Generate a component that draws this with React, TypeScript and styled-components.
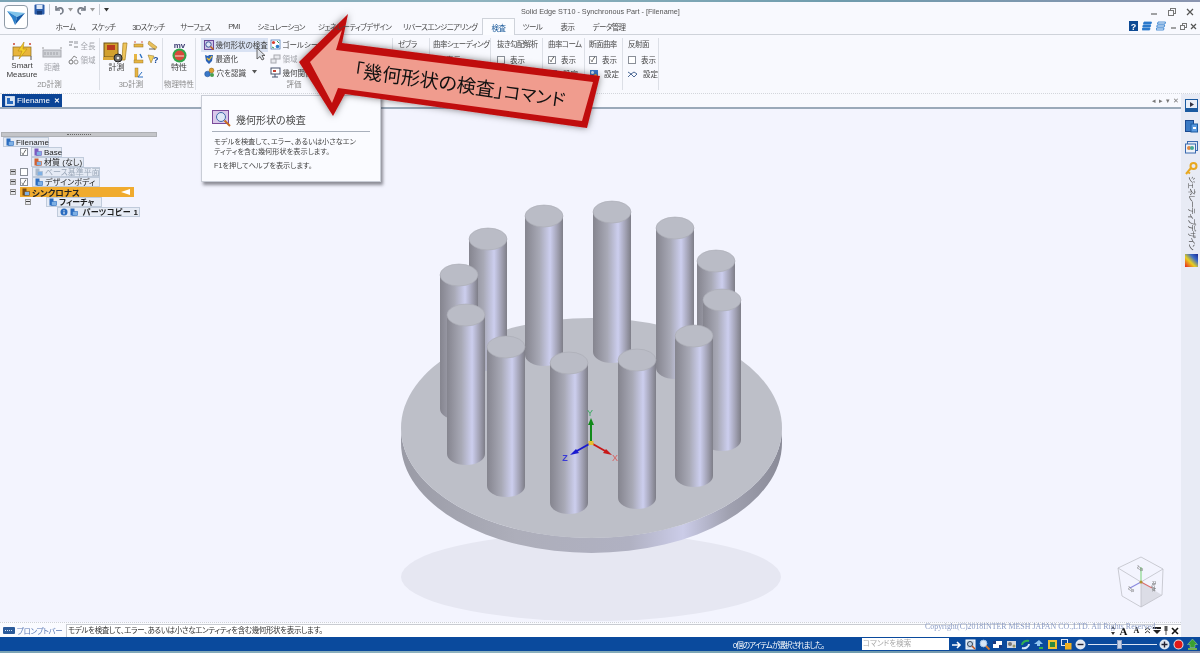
import React from 'react';
import styled, { createGlobalStyle } from 'styled-components';

const Global = createGlobalStyle`
  html, body { margin: 0; padding: 0; background: #f7f8fe; overflow: hidden; }
  * { box-sizing: border-box; }
`;

const JP = `"Noto Sans CJK JP", "Noto Sans", sans-serif`;

const Page = styled.div`
  position: relative;
  width: 1200px;
  height: 653px;
  overflow: hidden;
  display: flex;
  flex-direction: column;
  background: #f8f9fe;
  color: #3c3c3c;
  font-family: "Liberation Sans", ${JP};
  font-feature-settings: "palt";
  filter: blur(0.35px);
`;
const EdgeStrip = styled.div<{ $h: number }>`
  height: ${p => p.$h}px;
  flex: none;
  background: linear-gradient(90deg, #7ba3b4, #8fb3bf 40%, #6f9cad 70%, #8a94b0);
`;
const Header = styled.header`
  height: 32px;
  flex: none;
  display: flex;
  background: #f8f9fe;
`;
const AppCol = styled.div`
  width: 30px;
  flex: none;
  padding: 3px 0 0 4px;
`;
const AppButton = styled.div`
  width: 24px;
  height: 24px;
  border: 1px solid #8f9aa6;
  border-radius: 4px;
  background: #fff;
  display: flex;
  align-items: center;
  justify-content: center;
`;
const HeaderRest = styled.div`
  flex: 1;
  display: flex;
  flex-direction: column;
  min-width: 0;
`;
const TitleRow = styled.div`
  height: 16px;
  display: flex;
  align-items: center;
`;
const Qat = styled.div`
  width: 491px;
  display: flex;
  align-items: center;
  gap: 3px;
  padding: 0 0 1px 4px;
`;
const QatDivider = styled.span`
  width: 1px;
  height: 11px;
  background: #c6cad2;
  margin: 0 1px;
`;
const Title = styled.div`
  font-size: 7.25px;
  color: #555;
  white-space: nowrap;
  padding-top: 2px;
`;
const WinControls = styled.div`
  margin-left: auto;
  display: flex;
  gap: 10px;
  padding: 3px 6px 0 0;
`;
const TabRow = styled.nav`
  height: 16px;
  display: flex;
  margin-left: 17px;
  align-items: stretch;
`;
const Tab = styled.div<{ $w: number; $active?: boolean }>`
  width: ${p => p.$w}px;
  display: flex;
  align-items: center;
  justify-content: center;
  font-size: 7.5px;
  letter-spacing: -0.6px;
  white-space: nowrap;
  color: ${p => (p.$active ? '#1a5a9a' : '#4a4a4a')};
  background: ${p => (p.$active ? '#fbfcff' : 'transparent')};
  border: ${p => (p.$active ? '1px solid #cfd3da' : 'none')};
  border-bottom: none;
  position: relative;
  z-index: 1;
  height: ${p => (p.$active ? '17px' : '16px')};
`;
const MiniControls = styled.div`
  margin-left: auto;
  display: flex;
  align-items: center;
  gap: 4px;
  padding-right: 3px;
`;
const MiniWin = styled.div`
  display: flex;
  align-items: center;
  gap: 3px;
`;
const Ribbon = styled.section`
  height: 60px;
  flex: none;
  display: flex;
  border-top: 1px solid #cfd3da;
  border-bottom: 1px dotted #d3d6dc;
  background: #f8f9fe;
`;
const Group = styled.div<{ $w: number }>`
  width: ${p => p.$w}px;
  flex: none;
  display: flex;
  flex-direction: column;
  position: relative;
  margin: 3px 0;
  border-right: 1px solid #dcdfe6;
`;
const GroupBody = styled.div<{ $pl?: number }>`
  flex: 1;
  display: flex;
  padding-left: ${p => p.$pl ?? 0}px;
  min-height: 0;
`;
const GroupLabel = styled.div`
  height: 11px;
  font-size: 7.5px;
  line-height: 11px;
  text-align: center;
  color: #8b8b8b;
  white-space: nowrap;
`;
const LargeButton = styled.div<{ $w: number; $disabled?: boolean }>`
  width: ${p => p.$w}px;
  display: flex;
  flex-direction: column;
  align-items: center;
  padding-top: 3px;
  color: ${p => (p.$disabled ? '#a5a7ad' : '#3c3c3c')};
`;
const LargeIcon = styled.div`
  height: 22px;
  display: flex;
  align-items: center;
  justify-content: center;
`;
const LargeText = styled.div`
  font-size: 8px;
  line-height: 9px;
  text-align: center;
  white-space: nowrap;
`;
const SmallCol = styled.div<{ $ml?: number; $w?: number }>`
  display: flex;
  flex-direction: column;
  margin-left: ${p => p.$ml ?? 0}px;
  width: ${p => (p.$w ? `${p.$w}px` : 'auto')};
`;
const SmallRow = styled.div<{ $disabled?: boolean; $hover?: boolean }>`
  height: 14.5px;
  display: flex;
  align-items: center;
  gap: 1.5px;
  font-size: 7.5px;
  white-space: nowrap;
  padding-left: 3px;
  color: ${p => (p.$disabled ? '#a5a7ad' : '#3f3f3f')};
  background: ${p => (p.$hover ? '#d9e2f3' : 'transparent')};
`;
const InspectCol = styled.div<{ $w: number; $pl: number }>`
  width: ${p => p.$w}px;
  padding-left: ${p => p.$pl}px;
  display: flex;
  flex-direction: column;
`;
const InspectTitle = styled.div`
  height: 14.5px;
  font-size: 7.5px;
  line-height: 14.5px;
  letter-spacing: -0.55px;
  color: #4a4a4a;
  white-space: nowrap;
`;
const InspectRow = styled.div`
  height: 14px;
  display: flex;
  align-items: center;
  gap: 5px;
  font-size: 7.5px;
  color: #444;
  white-space: nowrap;
`;
const CheckBox = styled.span<{ $on?: boolean; $size?: number; $mr?: number }>`
  width: ${p => p.$size ?? 8}px;
  height: ${p => p.$size ?? 8}px;
  flex: none;
  border: 1px solid #8a8f98;
  background: #fff;
  display: inline-flex;
  align-items: center;
  justify-content: center;
  margin-right: ${p => p.$mr ?? 0}px;
  font-size: 7px;
  line-height: 1;
  color: #333;
  &::after { content: "${p => (p.$on ? '✓' : '')}"; }
`;
const Workspace = styled.div`
  flex: 1;
  display: flex;
  min-height: 0;
`;
const Center = styled.div`
  flex: 1;
  display: flex;
  flex-direction: column;
  min-width: 0;
  position: relative;
`;
const DocTabs = styled.div`
  height: 15px;
  flex: none;
  display: flex;
  align-items: flex-end;
  padding-left: 2px;
  background: #f8f9fe;
  border-bottom: 2px solid #9aa9b9;
`;
const DocTab = styled.div`
  width: 60px;
  height: 13px;
  display: flex;
  align-items: center;
  gap: 2px;
  padding-left: 3px;
  background: #0b4496;
  color: #fff;
  font-size: 8px;
`;
const DocClose = styled.span`
  margin-left: 2px;
  font-size: 7px;
  font-weight: bold;
`;
const DocNav = styled.div`
  margin-left: auto;
  height: 13px;
  display: flex;
  align-items: center;
  gap: 3px;
  padding-right: 2px;
  font-size: 7px;
  color: #777;
`;
const Main = styled.main`
  flex: 1;
  position: relative;
  min-height: 0;
  background: #f3f4fe;
`;
const Scene = styled.svg`
  position: absolute;
  left: 0;
  top: 0;
`;
const TreePane = styled.div`
  position: relative;
  width: 157px;
  padding-top: 23px;
`;
const ResizeBar = styled.div`
  height: 5px;
  margin-left: 1px;
  background: #c4c5c9;
  border: 1px solid #aeb0b4;
  display: flex;
  align-items: center;
  justify-content: center;
  &::after {
    content: "";
    width: 24px;
    border-top: 1px dotted #666;
  }
`;
const TreeRow = styled.div<{ $pl: number }>`
  height: 10px;
  display: flex;
  align-items: center;
  padding-left: ${p => p.$pl}px;
`;
const Expander = styled.span<{ $mr: number; $open?: boolean }>`
  width: 6px;
  height: 6px;
  flex: none;
  margin-right: ${p => p.$mr}px;
  border: 1px solid #9a9a9a;
  background: ${p => (p.$open ? '#e9e9ee' : '#cfd0d6')};
  position: relative;
  &::after {
    content: "";
    position: absolute;
    left: 0;
    top: 1px;
    width: 4px;
    height: 1px;
    background: #444;
  }
`;
const TreeNode = styled.div<{ $w: number; $ghost?: boolean; $bold?: boolean; $track?: number }>`
  width: ${p => p.$w}px;
  height: 9.5px;
  flex: none;
  display: flex;
  align-items: center;
  gap: 2px;
  padding-left: 2px;
  font-size: 8px;
  line-height: 9px;
  white-space: nowrap;
  letter-spacing: ${p => p.$track ?? 0}px;
  font-weight: ${p => (p.$bold ? 600 : 400)};
  color: ${p => (p.$ghost ? '#9aa7b8' : '#1c1c1c')};
  background: #e6ebf5;
  border: 1px solid #c0cbdb;
`;
const SyncNode = styled.div`
  width: 114px;
  height: 9.5px;
  flex: none;
  display: flex;
  align-items: center;
  gap: 2px;
  padding: 0 4px 0 2px;
  font-size: 8.5px;
  font-weight: 700;
  color: #222;
  background: #f0ab2e;
`;
const SyncFlag = styled.span`
  margin-left: auto;
  width: 0;
  height: 0;
  border-style: solid;
  border-width: 3px 9px 3px 0;
  border-color: transparent #fff transparent transparent;
`;
const PromptRow = styled.div`
  height: 15px;
  flex: none;
  display: flex;
  align-items: flex-end;
  gap: 2px;
  padding-left: 3px;
  background: #fafbff;
  border-top: 1px dotted #cfd2d8;
`;
const PromptLabel = styled.div`
  height: 13px;
  width: 48px;
  display: flex;
  align-items: center;
  gap: 2px;
  font-size: 7.5px;
  letter-spacing: -0.35px;
  color: #5a78b4;
  white-space: nowrap;
`;
const PromptInput = styled.div`
  flex: 1;
  height: 13px;
  margin-left: 13px;
  padding-left: 1px;
  background: #fff;
  border: 1px solid #c9ccd2;
  border-right: none;
  border-bottom: none;
  font-size: 7.5px;
  line-height: 12px;
  letter-spacing: -0.36px;
  color: #333;
  white-space: nowrap;
`;
const Copyright = styled.div`
  position: absolute;
  left: 925px;
  bottom: 6px;
  z-index: 1;
  font-size: 7.9px;
  font-family: "Liberation Serif", serif;
  color: #8a9bc6;
  white-space: nowrap;
`;
const FloatTools = styled.div`
  position: absolute;
  left: 1110px;
  bottom: 0;
  height: 13px;
  width: 71px;
  display: flex;
  align-items: center;
  gap: 2px;
  color: #111;
  font-weight: bold;
`;
const FloatA = styled.span<{ $s: number }>`
  font-family: "Liberation Serif", serif;
  font-size: ${p => p.$s}px;
  width: 11px;
  text-align: center;
`;
const Sidebar = styled.aside`
  width: 19px;
  flex: none;
  padding: 5px 0 0 4px;
  display: flex;
  flex-direction: column;
  align-items: flex-start;
  gap: 8px;
  background: #e8ebf5;
`;
const SideText = styled.div`
  writing-mode: vertical-rl;
  text-orientation: sideways;
  font-size: 7.5px;
  line-height: 9px;
  letter-spacing: -0.6px;
  color: #555;
  white-space: nowrap;
  height: 70px;
  margin: -7px 0 0 2px;
`;
const StatusBar = styled.footer`
  height: 14px;
  flex: none;
  display: flex;
  align-items: center;
  padding-left: 733px;
  background: #0a4a9d;
  color: #fff;
`;
const StatusText = styled.div`
  width: 129px;
  white-space: nowrap;
  font-size: 7.5px;
  letter-spacing: -0.95px;
`;
const SearchBox = styled.div`
  width: 87px;
  height: 12px;
  background: #fff;
  color: #a8a8a8;
  font-size: 7.5px;
  line-height: 12px;
  padding-left: 1px;
  white-space: nowrap;
`;
const StatusIcons = styled.div`
  display: flex;
  align-items: center;
  padding-left: 1px;
`;
const StatusSlot = styled.div`
  width: 13.7px;
  display: flex;
  justify-content: center;
`;
const Slider = styled.div`
  width: 69px;
  height: 1px;
  margin: 0 1px;
  background: #dbe4f4;
  position: relative;
`;
const Thumb = styled.span`
  position: absolute;
  left: 29px;
  top: -4px;
  width: 5px;
  height: 9px;
  background: #c9d3e6;
  border: 1px solid #8ea0c4;
`;
const Tooltip = styled.div`
  position: absolute;
  left: 201px;
  top: 95px;
  width: 180px;
  height: 87px;
  padding: 11px 10px 0;
  background: #fafbff;
  border: 1px solid #c9cdd6;
  box-shadow: 2px 3px 3px rgba(40, 40, 50, 0.5);
`;
const TipHead = styled.div`
  display: flex;
  align-items: flex-end;
  gap: 4px;
  height: 25px;
  padding: 0 0 4px 0;
  border-bottom: 1px solid #a9b0bc;
  font-size: 10px;
  line-height: 12px;
  color: #444;
`;
const TipText = styled.p`
  margin: 5px 0 0 2px;
  font-size: 7.2px;
  line-height: 9.5px;
  color: #444;
`;
const TipHelp = styled.p`
  margin: 5px 0 0 2px;
  font-size: 7.2px;
  line-height: 9px;
  color: #444;
`;
const Overlay = styled.svg`
  position: absolute;
  left: 0;
  top: 0;
  pointer-events: none;
`;
const ArrowLabel = styled.div`
  position: absolute;
  left: 356px;
  top: 57px;
  transform: rotate(8deg);
  transform-origin: left top;
  font-family: ${JP};
  font-size: 19px;
  line-height: 24px;
  color: #111;
  white-space: nowrap;
`;
const ArrowKana = styled.span`
  font-size: 17.5px;
`;

const Ico: React.FC<{ w: number; h: number; children: React.ReactNode }> = ({ w, h, children }) => (
  <svg width={w} height={h} viewBox={`0 0 ${w} ${h}`} style={{ flex: 'none', display: 'block' }}>{children}</svg>
);

const IconLogo = () => (
  <Ico w={20} h={18}>
    <polygon points="1,3 19,5 11,9" fill="#7fc3ea" />
    <polygon points="1,3 11,9 9,17 6,10" fill="#2b7fc9" />
    <polygon points="19,5 11,9 9,17" fill="#135aa8" />
  </Ico>
);
const IconSave = () => (
  <Ico w={11} h={11}>
    <rect x="0.5" y="0.5" width="10" height="10" rx="1" fill="#2a5caa" />
    <rect x="2.5" y="1" width="6" height="4" fill="#dfe8f6" />
    <rect x="3" y="7" width="5" height="3.5" fill="#173c78" />
  </Ico>
);
const IconUndo: React.FC<{ flip?: boolean }> = ({ flip }) => (
  <Ico w={11} h={10}>
    <g transform={flip ? 'translate(11,0) scale(-1,1)' : undefined} fill="none" stroke="#777d88" strokeWidth="1.6">
      <path d="M2 1v4h4" />
      <path d="M2 5c2-3 7-3 7 1 0 2-2 3-3 3" />
    </g>
  </Ico>
);
const Caret = ({ c = '#555' }: { c?: string }) => (
  <Ico w={5} h={4}><polygon points="0,0 5,0 2.5,3.5" fill={c} /></Ico>
);
const IconSmart = () => (
  <Ico w={20} h={19}>
    <circle cx="2" cy="2" r="1" fill="#c43" /><circle cx="18" cy="2" r="1" fill="#c43" />
    <rect x="1" y="5" width="18" height="9" fill="#e8b53c" stroke="#8a6a20" strokeWidth="0.7" />
    <path d="M1 14v4M19 14v4" stroke="#555" />
    <polygon points="12,0 6,9 10,9 7,17 15,7 11,7" fill="#f4d02a" stroke="#b98a10" strokeWidth="0.6" />
  </Ico>
);
const IconDist = () => (
  <Ico w={20} h={13}>
    <rect x="1" y="4" width="18" height="7" fill="#cfd1d6" stroke="#a9abb1" />
    <path d="M1 1v2M19 1v2" stroke="#999" />
    <path d="M3 6v3M6 6v3M9 6v3M12 6v3M15 6v3" stroke="#a0a2a8" />
  </Ico>
);
const IconMeas = () => (
  <Ico w={11} h={10}>
    <path d="M1 2h4M1 5h3M6 7h4" stroke="#a8aab0" strokeWidth="1.4" />
    <rect x="6" y="1" width="4" height="3" fill="#c4c6cc" />
  </Ico>
);
const IconArea = () => (
  <Ico w={11} h={10}>
    <circle cx="3" cy="7" r="2" fill="none" stroke="#777" />
    <circle cx="8" cy="7" r="2" fill="none" stroke="#999" />
    <path d="M3 5l3-4 3 2" stroke="#888" fill="none" />
  </Ico>
);
const IconCalc = () => (
  <Ico w={27} h={21}>
    <rect x="1" y="1" width="14" height="14" fill="#d2a02e" stroke="#6d5216" />
    <rect x="4" y="3" width="8" height="5" fill="#b83a1f" />
    <path d="M20 1l4 0-2 17h-3z" fill="#eec45a" stroke="#a37d1d" strokeWidth="0.7" />
    <rect x="0" y="15" width="14" height="3" fill="#d9a83a" />
    <circle cx="15" cy="16" r="4" fill="#6a6a6a" stroke="#222" />
    <circle cx="15" cy="16" r="1.3" fill="#eee" />
  </Ico>
);
const Icon3D: React.FC<{ k: number }> = ({ k }) => (
  <Ico w={11} h={11}>
    {k === 0 && <><rect x="1" y="5" width="9" height="3" fill="#e6b544" stroke="#8f6e1e" strokeWidth="0.5" /><circle cx="2" cy="3" r="0.8" fill="#c43" /><circle cx="9" cy="3" r="0.8" fill="#c43" /></>}
    {k === 1 && <><polygon points="2,1 10,7 8,10 1,4" fill="#e9c05a" stroke="#9b7720" strokeWidth="0.5" /><path d="M2 9h6" stroke="#666" /></>}
    {k === 2 && <><rect x="1" y="1" width="3" height="9" fill="#e6b544" /><rect x="1" y="7" width="9" height="3" fill="#e6b544" stroke="#8f6e1e" strokeWidth="0.4" /><path d="M7 1l2 4" stroke="#2a6fc0" strokeWidth="1.4" /></>}
    {k === 3 && <><polygon points="1,1 7,2 4,9" fill="#f0d060" stroke="#8f6e1e" strokeWidth="0.5" /><text x="6" y="9" fontSize="9" fontWeight="bold" fill="#1a4a9a" fontFamily="Liberation Sans">?</text></>}
    {k === 4 && <><rect x="2" y="1" width="3" height="9" fill="#e6b544" stroke="#8f6e1e" strokeWidth="0.4" /><path d="M5 10h5M5 10l4-5" stroke="#2a6fc0" /></>}
  </Ico>
);
const IconProp = () => (
  <Ico w={17} h={21}>
    <text x="8.5" y="6" textAnchor="middle" fontSize="8" fontWeight="bold" fill="#3a3a70" fontFamily="Liberation Sans">mv</text>
    <circle cx="8.5" cy="13.5" r="7" fill="#2ea84a" />
    <circle cx="8.5" cy="13.5" r="5" fill="#d8493a" />
    <path d="M4 14h9" stroke="#f0e0d0" />
  </Ico>
);
const IconCheck = () => (
  <Ico w={10} h={10}>
    <rect x="0.5" y="0.5" width="9" height="9" fill="#cfc4e6" stroke="#6a4a9a" />
    <circle cx="4.5" cy="4.5" r="2.7" fill="#dfe6f4" stroke="#3a5a9a" />
    <path d="M6.5 6.5L9.5 9.5" stroke="#c0651a" strokeWidth="1.5" />
  </Ico>
);
const IconOpt = () => (
  <Ico w={10} h={10}>
    <polygon points="1,1 4,2 5,1 9,1 8,7 5,10 2,7" fill="#2a62b8" />
    <path d="M3 4l2 2 3-4" stroke="#f0c030" strokeWidth="1.2" fill="none" />
  </Ico>
);
const IconHole = () => (
  <Ico w={11} h={11}>
    <circle cx="3.5" cy="7" r="2.8" fill="#3a78c8" stroke="#174a90" strokeWidth="0.5" />
    <circle cx="7.5" cy="3.5" r="2.4" fill="#e0a030" stroke="#885a10" strokeWidth="0.5" />
    <circle cx="8" cy="8" r="2" fill="#48a050" />
  </Ico>
);
const IconGoal = () => (
  <Ico w={11} h={11}>
    <rect x="1" y="1" width="9" height="9" fill="#fff" stroke="#3a6ab0" strokeWidth="0.7" />
    <circle cx="3.5" cy="3.5" r="1.6" fill="#d84030" />
    <circle cx="7.5" cy="7.5" r="1.8" fill="#2a7ac8" />
    <path d="M7 2l2 2M2 8l2 1" stroke="#2a9a50" />
  </Ico>
);
const IconRegion = () => (
  <Ico w={11} h={10}>
    <rect x="4" y="1" width="6" height="4" fill="#e8e9ee" stroke="#a8aab0" />
    <rect x="1" y="5" width="5" height="4" fill="#e8e9ee" stroke="#a8aab0" />
  </Ico>
);
const IconGeo = () => (
  <Ico w={11} h={11}>
    <rect x="1" y="1" width="9" height="6" fill="#fff" stroke="#44506a" />
    <rect x="3" y="3" width="3" height="2" fill="#c84030" />
    <path d="M5 7v3M2 10h6" stroke="#44506a" />
  </Ico>
);
const IconSetting = ({ mode = 0 }: { mode?: number }) => (
  <Ico w={10} h={10}>
    {mode === 0 ? (
      <><rect x="1" y="1" width="8" height="8" fill="#3a78c8" /><circle cx="3.5" cy="3.5" r="1.5" fill="#d8e8f8" /><circle cx="6.5" cy="6.5" r="1.5" fill="#e6a030" /></>
    ) : (
      <path d="M0 3l3 2 3-2 3 2M0 8l3-3 3 3 3-3" stroke="#3a5a8a" fill="none" strokeWidth="0.9" />
    )}
  </Ico>
);
const IconDoc = ({ c = '#2a6cc0' }: { c?: string }) => (
  <Ico w={8} h={8}>
    <rect x="0.5" y="0.5" width="4" height="7" fill={c} />
    <rect x="2.5" y="3.5" width="5" height="4" fill="#7eb0e4" stroke={c} strokeWidth="0.6" />
  </Ico>
);
const IconInfo = () => (
  <Ico w={8} h={8}>
    <circle cx="4" cy="4" r="3.5" fill="#2a6cc0" />
    <path d="M4 2v.8M4 3.6V6.2" stroke="#fff" strokeWidth="1" />
  </Ico>
);
const IconFile = () => (
  <Ico w={10} h={10}>
    <rect x="0.5" y="0.5" width="9" height="9" fill="#d8e6f6" stroke="#fff" strokeWidth="0.6" />
    <rect x="2" y="2" width="3" height="6" fill="#2a6cc0" />
    <rect x="4" y="5" width="4" height="3" fill="#2a6cc0" />
  </Ico>
);
const WinBtn: React.FC<{ k: 'min' | 'max' | 'x'; s?: number }> = ({ k, s = 8 }) => (
  <Ico w={s} h={s}>
    {k === 'min' && <path d={`M1 ${s - 2}h${s - 2}`} stroke="#666" strokeWidth="1.2" />}
    {k === 'max' && <><rect x="2.5" y="0.5" width={s - 3} height={s - 3} fill="none" stroke="#777" /><rect x="0.5" y="2.5" width={s - 3} height={s - 3} fill="#f8f9fe" stroke="#777" /></>}
    {k === 'x' && <path d={`M1 1L${s - 1} ${s - 1}M${s - 1} 1L1 ${s - 1}`} stroke="#555" strokeWidth="1.2" />}
  </Ico>
);
const IconHelp = () => (
  <Ico w={9} h={10}>
    <rect width="9" height="10" fill="#0e4a94" />
    <text x="4.5" y="8.5" textAnchor="middle" fontSize="9" fontWeight="bold" fill="#fff" fontFamily="Liberation Sans">?</text>
  </Ico>
);
const IconStack = ({ outline }: { outline?: boolean }) => (
  <Ico w={10} h={10}>
    <g fill={outline ? '#e8f0fa' : '#2a78cc'} stroke="#2a78cc" strokeWidth="0.8">
      <polygon points="2,1 9.5,1 9,3 1.5,3" /><polygon points="1.2,4 8.7,4 8.2,6 .8,6" /><polygon points=".6,7 8,7 7.6,9 .2,9" />
    </g>
  </Ico>
);
const SideIcon: React.FC<{ k: number }> = ({ k }) => (
  <Ico w={13} h={13}>
    {k === 0 && <><rect x="0.5" y="0.5" width="12" height="12" fill="#e8eef8" stroke="#1b5aa0" /><rect x="0.5" y="9" width="12" height="3.5" fill="#1b5aa0" /><polygon points="5,3 9,5.5 5,8" fill="#334" /></>}
    {k === 1 && <><rect x="0.5" y="0.5" width="8" height="11" fill="#3a7ac4" stroke="#1b4a90" /><rect x="6" y="4" width="6.5" height="8" fill="#5a9ae0" stroke="#1b5aa0" /><rect x="8" y="7" width="3" height="2" fill="#fff" /></>}
    {k === 2 && <><rect x="2.5" y="0.5" width="10" height="9" fill="#dfe6f2" stroke="#3a6ab0" /><rect x="0.5" y="3" width="10" height="9" fill="#eef2f8" stroke="#3a6ab0" /><circle cx="4" cy="7" r="2" fill="#d84" /><circle cx="7" cy="7" r="2" fill="#4a9" /></>}
    {k === 3 && <><circle cx="8.5" cy="4" r="3" fill="none" stroke="#e8a820" strokeWidth="2" /><path d="M6 6L1 12M3 10l2 1.5" stroke="#e8a820" strokeWidth="2" /></>}
    {k === 4 && <><defs><linearGradient id="hm" x1="0" y1="1" x2="1" y2="0"><stop offset="0" stopColor="#e82020" /><stop offset=".4" stopColor="#e8d020" /><stop offset=".7" stopColor="#3a6ac8" /><stop offset="1" stopColor="#1a2a90" /></linearGradient></defs><rect width="13" height="13" fill="url(#hm)" /></>}
  </Ico>
);
const StatusIcon: React.FC<{ k: number }> = ({ k }) => (
  <Ico w={11} h={11}>
    {k === 0 && <path d="M1 6h7M6 3l3 3-3 3" stroke="#fff" strokeWidth="1.6" fill="none" />}
    {k === 1 && <><rect x="1" y="1" width="9" height="9" fill="#c7d6ea" stroke="#fff" /><circle cx="5" cy="5" r="2.5" fill="none" stroke="#345" /><path d="M7 7l3 3" stroke="#c0501a" strokeWidth="1.4" /></>}
    {k === 2 && <><circle cx="4.5" cy="4.5" r="3.4" fill="#d6e4f5" stroke="#9fc0e8" /><path d="M7 7l3.5 3.5" stroke="#d8782a" strokeWidth="1.8" /></>}
    {k === 3 && <><rect x="1" y="2" width="9" height="7" fill="#fff" /><path d="M1 2h3v3h-3zM7 6h3v3h-3z" fill="#1a3a80" /></>}
    {k === 4 && <><rect x="1" y="2" width="9" height="7" fill="#d4d8e0" /><circle cx="4" cy="5" r="2" fill="#777" /><circle cx="8" cy="7" r="1.5" fill="#996" /></>}
    {k === 5 && <><path d="M2 6c0-3 4-5 7-4" stroke="#32b050" strokeWidth="2" fill="none" /><path d="M9 5c0 3-4 5-7 4" stroke="#d8e8f8" strokeWidth="2" fill="none" /></>}
    {k === 6 && <><path d="M6 1l4 4h-3v2h-3v-2h-3z" fill="#8ec4f0" /><rect x="6" y="8" width="4" height="2" fill="#32b050" /></>}
    {k === 7 && <><rect x="1" y="1" width="9" height="9" fill="#f0c030" /><rect x="3" y="3" width="5" height="5" fill="#2a8a40" /></>}
    {k === 8 && <><rect x="0.5" y="0.5" width="6" height="6" fill="none" stroke="#dfe8f6" /><rect x="4" y="4" width="6.5" height="6.5" fill="#f0b020" /></>}
    {k === 9 && <><circle cx="5.5" cy="5.5" r="5" fill="#dfe6f0" /><path d="M2.5 5.5h6" stroke="#223" strokeWidth="1.4" /></>}
    {k === 10 && <><circle cx="5.5" cy="5.5" r="5" fill="#dfe6f0" /><path d="M2.5 5.5h6M5.5 2.5v6" stroke="#223" strokeWidth="1.4" /></>}
    {k === 11 && <><circle cx="5.5" cy="5.5" r="5" fill="#e8e8e8" /><circle cx="5.5" cy="5.5" r="4" fill="#e01818" /></>}
    {k === 12 && <><path d="M5.5 0l5 5.5h-2.5v3h-5v-3h-2.5z" fill="#3aa030" stroke="#c8e8c0" strokeWidth="0.4" /><rect x="1" y="9" width="9" height="2" fill="#70b050" /></>}
  </Ico>
);

const CYL = [
  { cx: 488, t: 239, b: 360 },
  { cx: 459, t: 275, b: 409 },
  { cx: 544, t: 216, b: 355 },
  { cx: 612, t: 212, b: 352 },
  { cx: 675, t: 228, b: 368 },
  { cx: 716, t: 261, b: 400 },
  { cx: 722, t: 300, b: 440 },
  { cx: 466, t: 315, b: 454 },
  { cx: 506, t: 347, b: 486 },
  { cx: 569, t: 363, b: 503 },
  { cx: 637, t: 360, b: 498 },
  { cx: 694, t: 336, b: 476 },
];

const SceneArt = () => (
  <Scene width={1181} height={513} viewBox="0 109 1181 513">
    <defs>
      <linearGradient id="cyl" x1="0" x2="1" y1="0" y2="0">
        <stop offset="0" stopColor="#85858f" />
        <stop offset=".12" stopColor="#90909b" />
        <stop offset=".38" stopColor="#a8a9b6" />
        <stop offset=".66" stopColor="#ccceee" />
        <stop offset=".86" stopColor="#a0a0b2" />
        <stop offset="1" stopColor="#7e7e88" />
      </linearGradient>
      <linearGradient id="rim" x1="0" x2="1" y1="0" y2="0">
        <stop offset="0" stopColor="#9a9ba6" />
        <stop offset=".3" stopColor="#adaeba" />
        <stop offset=".6" stopColor="#b0b1c2" />
        <stop offset=".74" stopColor="#cbcce8" />
        <stop offset=".86" stopColor="#a0a1b0" />
        <stop offset="1" stopColor="#8a8b98" />
      </linearGradient>
    </defs>
    <ellipse cx="591" cy="577" rx="190" ry="44" fill="#e6e7f2" />
    <path d="M401 428 A190.5 110 0 0 0 782 428 L782 443 A190.5 110 0 0 1 401 443 Z" fill="url(#rim)" />
    <ellipse cx="591.5" cy="428" rx="190.5" ry="110" fill="#bdbfc8" />
    {CYL.map(c => (
      <g key={c.cx}>
        <path d={`M${c.cx - 19} ${c.t} L${c.cx - 19} ${c.b} A19 11 0 0 0 ${c.cx + 19} ${c.b} L${c.cx + 19} ${c.t} Z`} fill="url(#cyl)" />
        <ellipse cx={c.cx} cy={c.t} rx="19" ry="11" fill="#babcc6" stroke="#a9abb4" strokeWidth="0.6" />
      </g>
    ))}
    <g fontFamily="Liberation Sans" fontSize="9">
      <path d="M591 443V423" stroke="#118a1a" strokeWidth="2" />
      <polygon points="591,418 588,425 594,425" fill="#118a1a" />
      <path d="M591 443L575 452" stroke="#1a1ad0" strokeWidth="2" />
      <polygon points="570,455 576,449 579,453" fill="#1a1ad0" />
      <path d="M591 443L607 452" stroke="#c81818" strokeWidth="2" />
      <polygon points="612,455 606,449 603,453" fill="#c81818" />
      <rect x="588.5" y="441" width="5" height="4" fill="#e6c030" />
      <text x="590" y="416" fill="#3aa860" textAnchor="middle">Y</text>
      <text x="565" y="461" fill="#3a3ad8" textAnchor="middle" fontWeight="bold">Z</text>
      <text x="615" y="461" fill="#d86060" textAnchor="middle">X</text>
    </g>
    <g fill="none" stroke="#bfc0c8" strokeWidth="0.8">
      <polygon points="1141,582 1162,595 1141,607" fill="#dcdde6" stroke="none" />
      <polygon points="1141,557 1163,569 1162,595 1141,607 1122,596 1118,568" />
      <path d="M1118 568L1141 582L1163 569M1141 582V607" />
    </g>
    <path d="M1141 582V567" stroke="#8ad88a" strokeWidth="1.2" />
    <path d="M1141 582L1130 588" stroke="#8a8ae0" strokeWidth="1.2" />
    <path d="M1141 582L1152 588" stroke="#d87070" strokeWidth="1.2" />
    <circle cx="1141" cy="582" r="1.5" fill="#b09030" />
    <g fontFamily="Liberation Sans" fontSize="4.5" fill="#666">
      <text x="1136" y="568" transform="rotate(25 1136 568)">Top</text>
      <text x="1127" y="589" transform="rotate(25 1127 589)">Top</text>
      <text x="1152" y="581" transform="rotate(90 1152 581)">Right</text>
    </g>
  </Scene>
);

const TABS: [string, number, boolean?][] = [
  ['ホーム', 37], ['スケッチ', 39], ['3Dスケッチ', 51], ['サーフェス', 43], ['PMI', 34], ['シミュレーション', 60],
  ['ジェネレーティブデザイン', 87], ['リバースエンジニアリング', 84], ['検査', 33, true], ['ツール', 35], ['表示', 35], ['データ管理', 48],
];

export default function App() {
  return (
    <Page>
      <Global />
      <EdgeStrip $h={2} />
      <Header>
        <AppCol><AppButton><IconLogo /></AppButton></AppCol>
        <HeaderRest>
          <TitleRow>
            <Qat>
              <IconSave />
              <QatDivider />
              <IconUndo /><Caret c="#999" />
              <IconUndo flip /><Caret c="#999" />
              <QatDivider />
              <Caret c="#333" />
            </Qat>
            <Title>Solid Edge ST10 - Synchronous Part - [Filename]</Title>
            <WinControls><WinBtn k="min" /><WinBtn k="max" /><WinBtn k="x" /></WinControls>
          </TitleRow>
          <TabRow>
            {TABS.map(([t, w, a]) => <Tab key={t} $w={w} $active={a}>{t}</Tab>)}
            <MiniControls>
              <IconHelp /><IconStack /><IconStack outline />
              <MiniWin><WinBtn k="min" s={7} /><WinBtn k="max" s={7} /><WinBtn k="x" s={7} /></MiniWin>
            </MiniControls>
          </TabRow>
        </HeaderRest>
      </Header>
      <Ribbon>
        <Group $w={100}>
          <GroupBody $pl={2}>
            <LargeButton $w={40}>
              <LargeIcon><IconSmart /></LargeIcon>
              <LargeText>Smart<br />Measure</LargeText>
            </LargeButton>
            <LargeButton $w={20} $disabled>
              <LargeIcon><IconDist /></LargeIcon>
              <LargeText>距離</LargeText>
            </LargeButton>
            <SmallCol $ml={3}>
              <SmallRow $disabled><IconMeas />全長</SmallRow>
              <SmallRow $disabled><IconArea />領域</SmallRow>
            </SmallCol>
          </GroupBody>
          <GroupLabel>2D計測</GroupLabel>
        </Group>
        <Group $w={63}>
          <GroupBody $pl={3}>
            <LargeButton $w={27}>
              <LargeIcon><IconCalc /></LargeIcon>
              <LargeText>計測</LargeText>
            </LargeButton>
            <SmallCol>
              <SmallRow><Icon3D k={0} /></SmallRow>
              <SmallRow><Icon3D k={2} /></SmallRow>
              <SmallRow><Icon3D k={4} /></SmallRow>
            </SmallCol>
            <SmallCol>
              <SmallRow><Icon3D k={1} /></SmallRow>
              <SmallRow><Icon3D k={3} /></SmallRow>
            </SmallCol>
          </GroupBody>
          <GroupLabel>3D計測</GroupLabel>
        </Group>
        <Group $w={33}>
          <GroupBody>
            <LargeButton $w={32}>
              <LargeIcon><IconProp /></LargeIcon>
              <LargeText>特性</LargeText>
            </LargeButton>
          </GroupBody>
          <GroupLabel>物理特性</GroupLabel>
        </Group>
        <Group $w={197}>
          <GroupBody $pl={5}>
            <SmallCol $w={67}>
              <SmallRow $hover><IconCheck />幾何形状の検査</SmallRow>
              <SmallRow><IconOpt />最適化</SmallRow>
              <SmallRow><IconHole />穴を認識&nbsp;&nbsp;<Caret /></SmallRow>
            </SmallCol>
            <SmallCol $ml={-1} $w={85}>
              <SmallRow><IconGoal />ゴールシーク</SmallRow>
              <SmallRow $disabled><IconRegion />領域</SmallRow>
              <SmallRow><IconGeo />幾何関係</SmallRow>
            </SmallCol>
          </GroupBody>
          <GroupLabel>評価</GroupLabel>
        </Group>
        <Group $w={37}>
          <InspectCol $w={36} $pl={5}>
            <InspectTitle>ゼブラ</InspectTitle>
            <InspectRow><CheckBox />表示</InspectRow>
          </InspectCol>
        </Group>
        <Group $w={61}>
          <InspectCol $w={60} $pl={3}>
            <InspectTitle>曲率シェーディング</InspectTitle>
            <InspectRow><CheckBox />表示</InspectRow>
          </InspectCol>
        </Group>
        <Group $w={52}>
          <InspectCol $w={51} $pl={6}>
            <InspectTitle>抜き勾配解析</InspectTitle>
            <InspectRow><CheckBox />表示</InspectRow>
          </InspectCol>
        </Group>
        <Group $w={42}>
          <InspectCol $w={41} $pl={5}>
            <InspectTitle>曲率コーム</InspectTitle>
            <InspectRow><CheckBox $on />表示</InspectRow>
            <InspectRow><IconSetting />設定</InspectRow>
          </InspectCol>
        </Group>
        <Group $w={38}>
          <InspectCol $w={37} $pl={4}>
            <InspectTitle>断面曲率</InspectTitle>
            <InspectRow><CheckBox $on />表示</InspectRow>
            <InspectRow><IconSetting />設定</InspectRow>
          </InspectCol>
        </Group>
        <Group $w={36}>
          <InspectCol $w={35} $pl={5}>
            <InspectTitle>反射面</InspectTitle>
            <InspectRow><CheckBox />表示</InspectRow>
            <InspectRow><IconSetting mode={1} />設定</InspectRow>
          </InspectCol>
        </Group>
      </Ribbon>
      <Workspace>
        <Center>
          <DocTabs>
            <DocTab><IconFile />Filename<DocClose>✕</DocClose></DocTab>
            <DocNav><span>◂</span><span>▸</span><span>▾</span><span>✕</span></DocNav>
          </DocTabs>
          <Main>
            <SceneArt />
            <TreePane>
              <ResizeBar />
              <TreeRow $pl={3}><TreeNode $w={46}><IconDoc />Filename</TreeNode></TreeRow>
              <TreeRow $pl={20}><CheckBox $on $mr={3} /><TreeNode $w={31}><IconDoc c="#7a5ac0" />Base</TreeNode></TreeRow>
              <TreeRow $pl={31}><TreeNode $w={53}><IconDoc c="#d06030" />材質 (なし)</TreeNode></TreeRow>
              <TreeRow $pl={10}><Expander $mr={4} /><CheckBox $mr={4} /><TreeNode $w={68} $ghost><IconDoc c="#a8b8cc" />ベース基準平面</TreeNode></TreeRow>
              <TreeRow $pl={10}><Expander $mr={4} /><CheckBox $on $mr={4} /><TreeNode $w={68}><IconDoc />デザインボディ</TreeNode></TreeRow>
              <TreeRow $pl={10}><Expander $mr={4} $open /><SyncNode><IconDoc c="#7a4a10" />シンクロナス<SyncFlag /></SyncNode></TreeRow>
              <TreeRow $pl={25}><Expander $mr={15} $open /><TreeNode $w={56} $bold><IconDoc />フィーチャ</TreeNode></TreeRow>
              <TreeRow $pl={57}><TreeNode $w={83} $bold $track={0.35}><IconInfo /><IconDoc />&nbsp;パーツコピー 1</TreeNode></TreeRow>
            </TreePane>
          </Main>
          <PromptRow>
            <PromptLabel>
              <Ico w={12} h={7}><rect width="12" height="7" rx="1" fill="#2a5a9a" /><path d="M2 3.5h8" stroke="#cfe0f4" strokeDasharray="1 1" /></Ico>
              プロンプトバー
            </PromptLabel>
            <PromptInput>モデルを検査して、エラー、あるいは小さなエンティティを含む幾何形状を表示します。</PromptInput>
          </PromptRow>
          <Copyright>Copyright(C)2018INTER MESH JAPAN CO.,LTD. All Rights Reserved.</Copyright>
          <FloatTools>
            <Ico w={6} h={11}><polygon points="3,1 5,4 1,4" fill="#333" /><polygon points="3,10 5,7 1,7" fill="#333" /></Ico>
            <FloatA $s={11}>A</FloatA>
            <FloatA $s={8}>A</FloatA>
            <Ico w={7} h={7}><path d="M1 3l2.5-2 2.5 2M1 6l2.5-2 2.5 2" stroke="#333" fill="none" /></Ico>
            <Ico w={8} h={7}><rect x="0" y="0" width="8" height="2" fill="#222" /><polygon points="0,3 8,3 4,7" fill="#222" /></Ico>
            <Ico w={6} h={9}><rect x="1.5" y="0" width="3" height="5" fill="#555" /><path d="M3 5v4" stroke="#555" /></Ico>
            <Ico w={8} h={8}><path d="M1 1l6 6M7 1L1 7" stroke="#111" strokeWidth="1.6" /></Ico>
          </FloatTools>
        </Center>
        <Sidebar>
          <SideIcon k={0} />
          <SideIcon k={1} />
          <SideIcon k={2} />
          <SideIcon k={3} />
          <SideText>ジェネレーティブデザイン</SideText>
          <SideIcon k={4} />
        </Sidebar>
      </Workspace>
      <StatusBar>
        <StatusText>0個のアイテムが選択されました。</StatusText>
        <SearchBox>コマンドを検索</SearchBox>
        <StatusIcons>
          {[0, 1, 2, 3, 4, 5, 6, 7, 8, 9].map(k => <StatusSlot key={k}><StatusIcon k={k} /></StatusSlot>)}
          <Slider><Thumb /></Slider>
          {[10, 11, 12].map(k => <StatusSlot key={k}><StatusIcon k={k} /></StatusSlot>)}
        </StatusIcons>
      </StatusBar>
      <EdgeStrip $h={2} />
      <Tooltip>
        <TipHead>
          <Ico w={20} h={17}>
            <rect x="0.5" y="0.5" width="16" height="13" fill="#d9c8ea" stroke="#7a4a9a" />
            <circle cx="9" cy="7" r="4.5" fill="#dfe8f6" stroke="#3f6aa8" />
            <path d="M12.5 10.5L18 16" stroke="#c86a20" strokeWidth="2" />
          </Ico>
          幾何形状の検査
        </TipHead>
        <TipText>モデルを検査して、エラー、あるいは小さなエン<br />ティティを含む幾何形状を表示します。</TipText>
        <TipHelp>F1を押してヘルプを表示します。</TipHelp>
      </Tooltip>
      <Overlay width={1200} height={653} viewBox="0 0 1200 653">
        <defs>
          <filter id="as" x="-10%" y="-20%" width="120%" height="140%">
            <feDropShadow dx="0" dy="0" stdDeviation="3.5" floodColor="#000" floodOpacity=".5" />
          </filter>
        </defs>
        <polygon points="299,62 348,14 342,43 600,76 587,128 345,94 333,116" fill="#c00d0d" filter="url(#as)" />
        <polygon points="310,62 342,30 336,50 593,82 582,121 338,88 332,103" fill="#f09c8e" />
        <path d="M257 48V59L260 56.5L262 60L264 59L262 55.5H265Z" fill="#dfe3ea" stroke="#444" strokeWidth="0.8" />
      </Overlay>
      <ArrowLabel>「幾何形状の検査」<ArrowKana>コマンド</ArrowKana></ArrowLabel>
    </Page>
  );
}
